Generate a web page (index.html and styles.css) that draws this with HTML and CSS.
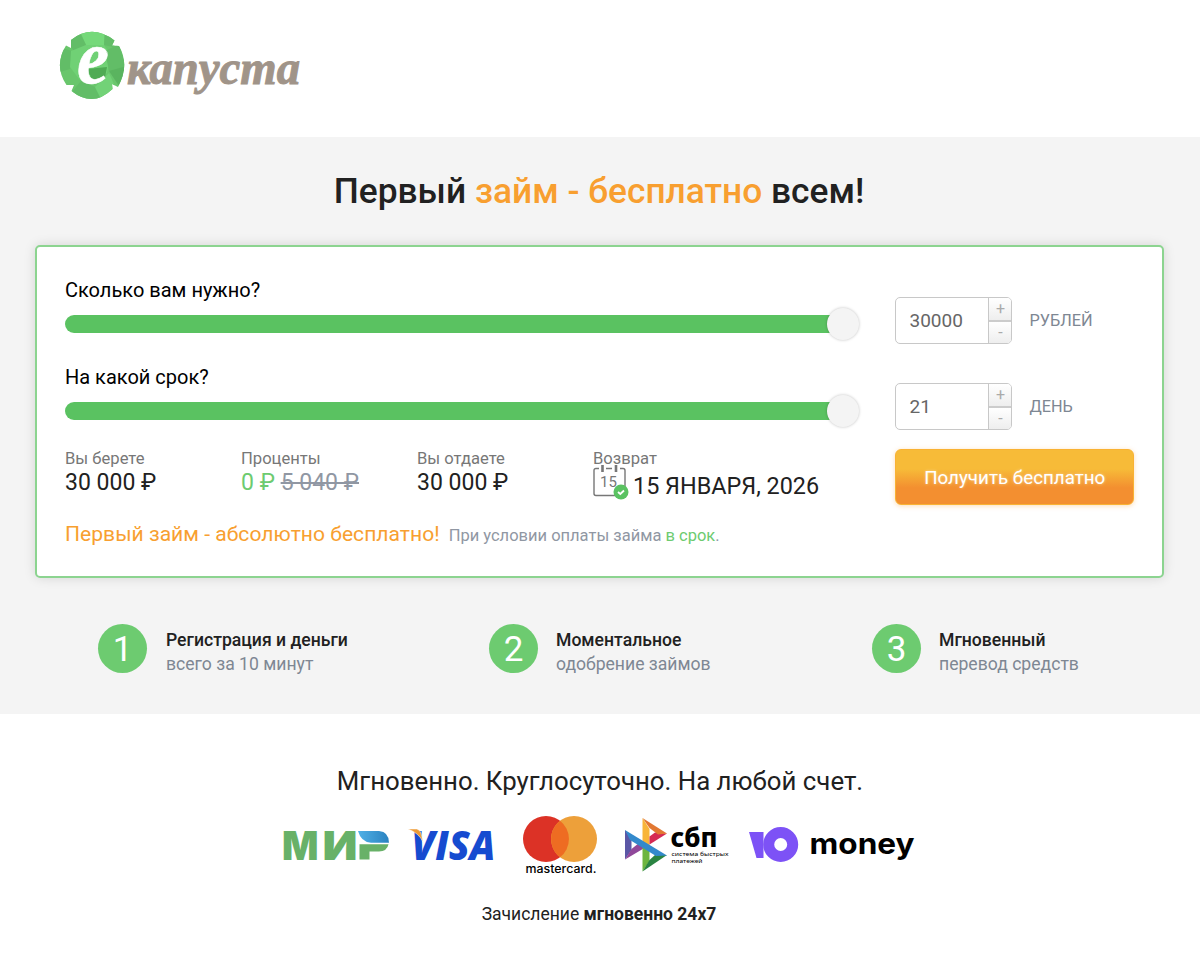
FILE: index.html
```html
<!DOCTYPE html>
<html lang="ru">

<head>
    <meta charset="UTF-8">
    <meta name="viewport" content="width=device-width, initial-scale=1.0">
    <title>еКапуста</title>
    <link rel="stylesheet" href="styles.css">
</head>

<body>
    <header class="header">
        <svg class="logo" width="250" height="80" viewBox="0 0 250 80">
            <clipPath id="gem">
                <path d="M12 9 Q33 -7.500 55.500 9.500 L53 14.500 L60 15 Q71 34 59 56 L53 53 L53.500 58 Q34 77 12.500 60 L15 54 L7.500 54 Q-5.500 35 7 14.500 L12 17 Z" />
            </clipPath>
            <g clip-path="url(#gem)">
                <rect x="-3" width="74" height="74" fill="#69c66c" />
                <path d="M20 -2 L27 14 L45 14 L46 -2 Z" fill="#75d97a" />
                <path d="M10 6 L20 0 L27 14 L15 20 L12 16 Z" fill="#62bd67" />
                <path d="M46 0 L45 14 L54 16 L60 10 Z" fill="#62bd67" />
                <path d="M-3 15 L13 20 L11 38 L-3 42 Z" fill="#62bd67" />
                <path d="M12 20 L27 14 L45 14 L52 24 L48 42 L34 54 L20 48 L11 36 Z" fill="#70d175" />
                <path d="M12 62 L22 50 L36 56 L43 70 L12 70 Z" fill="#62bd67" />
                <path d="M36 56 L50 42 L58 60 L43 70 Z" fill="#72d277" />
                <path d="M60 13 L68 40 L50 40 L46 20 Z" fill="#62bd67" />
                <path d="M50 40 L68 35 L62 58 Z" fill="#5ab45f" />
                <path d="M28 38 L48 36 L46 46 L34 50 Z" fill="#4fab54" />
            </g>
            <text class="logo-e" x="18" y="52" textLength="32" lengthAdjust="spacingAndGlyphs">е</text>
            <text class="logo-name" x="68" y="53" textLength="173" lengthAdjust="spacingAndGlyphs">капуста</text>
        </svg>
    </header>

    <main class="main">
        <h1 class="title">Первый <span>займ - бесплатно</span> всем!</h1>

        <section class="calc">
            <div class="calc-left">
                <div class="slider">
                    <label>Сколько вам нужно?</label>
                    <div class="track"><i class="handle"></i></div>
                </div>
                <div class="slider">
                    <label>На какой срок?</label>
                    <div class="track"><i class="handle"></i></div>
                </div>
                <div class="totals">
                    <div class="total">
                        <p>Вы берете</p>
                        <b>30 000 ₽</b>
                    </div>
                    <div class="total">
                        <p>Проценты</p>
                        <b><em>0 ₽</em> <s>5 040 ₽</s></b>
                    </div>
                    <div class="total">
                        <p>Вы отдаете</p>
                        <b>30 000 ₽</b>
                    </div>
                    <div class="total total-date">
                        <p>Возврат</p>
                        <div class="date">
                            <svg width="36" height="36" viewBox="0 0 36 36">
                                <path d="M6 3.500 H3 Q1 3.500 1 5.500 V28.500 Q1 30.500 3 30.500 H30 Q32 30.500 32 28.500 V5.500 Q32 3.500 30 3.500 H27 M13 3.500 H19" fill="none" stroke="#777" stroke-width="1.400" />
                                <path d="M9.500 0 V7 M23 0 V7" stroke="#777" stroke-width="2.600" />
                                <text x="7" y="22" class="cal-day">15</text>
                                <circle cx="28" cy="27" r="7.500" fill="#5ac261" />
                                <path d="M25 27 L27.300 29 L31 25.500" fill="none" stroke="#fff" stroke-width="1.800" />
                            </svg>
                            <b>15 ЯНВАРЯ, 2026</b>
                        </div>
                    </div>
                </div>
                <p class="note"><span>Первый займ - абсолютно бесплатно!</span><small>При условии оплаты займа <em>в срок</em>.</small></p>
            </div>
            <div class="calc-right">
                <div class="field">
                    <div class="spin">
                        <span class="value">30000</span>
                        <div class="steps-btn"><span>+</span><span>-</span></div>
                    </div>
                    <span class="unit">РУБЛЕЙ</span>
                </div>
                <div class="field">
                    <div class="spin">
                        <span class="value">21</span>
                        <div class="steps-btn"><span>+</span><span>-</span></div>
                    </div>
                    <span class="unit">ДЕНЬ</span>
                </div>
                <a class="btn">Получить бесплатно</a>
            </div>
        </section>

        <ul class="steps">
            <li>
                <span class="num">1</span>
                <p><b>Регистрация и деньги</b><span>всего за 10 минут</span></p>
            </li>
            <li>
                <span class="num">2</span>
                <p><b>Моментальное</b><span>одобрение займов</span></p>
            </li>
            <li>
                <span class="num">3</span>
                <p><b>Мгновенный</b><span>перевод средств</span></p>
            </li>
        </ul>
    </main>

    <footer class="footer">
        <h2>Мгновенно. Круглосуточно. На любой счет.</h2>
        <div class="pays">
            <svg class="mir" width="106" height="32" viewBox="0 0 106 32">
                <defs>
                    <linearGradient id="mirBlue">
                        <stop offset="0" stop-color="#4fb0e6" />
                        <stop offset="1" stop-color="#2a82c0" />
                    </linearGradient>
                </defs>
                <text x="-2" y="29.500" textLength="36.500" lengthAdjust="spacingAndGlyphs">М</text>
                <text x="38.500" y="29.500" textLength="35" lengthAdjust="spacingAndGlyphs">И</text>
                <path d="M75.500 14.300 H104.500 Q103 21.500 95 21.500 H85.500 V29.500 H75.500 Z" fill="#68b168" />
                <path d="M74 1 H95 Q105 2 105 12.800 H87 Q77 12 74 1 Z" fill="url(#mirBlue)" />
            </svg>
            <svg class="visa" width="88" height="32" viewBox="0 0 88 32">
                <text x="3.500" y="31" textLength="84" lengthAdjust="spacingAndGlyphs">VISA</text>
                <path d="M0 0 H9 Q12 1 13 4 L15 13 Q11 4 0 0 Z" fill="#ee9a35" stroke="#fff" stroke-width=".5" />
            </svg>
            <svg class="mastercard" width="76" height="62" viewBox="0 0 76 62">
                <circle cx="23" cy="24" r="23" fill="#dc3226" />
                <circle cx="51" cy="24" r="23" fill="#eda03a" />
                <path d="M37 5.800 A23 23 0 0 1 37 42.200 A23 23 0 0 1 37 5.800 Z" fill="#ee6c22" />
                <text x="2.500" y="58" textLength="71" lengthAdjust="spacingAndGlyphs">mastercard.</text>
            </svg>
            <svg class="sbp" width="104" height="54" viewBox="0 0 104 54">
                <path d="M0 11 L6.500 20 V31 L0 40.500 Z" fill="#5b57a6" />
                <path d="M0 40.500 L6.500 30 L14 24 L22 27.500 Z" fill="#90489a" />
                <path d="M17.500 -1 L24.500 10 V27 L17.500 23 Z" fill="#f8b53a" />
                <path d="M42 14.500 L24.500 25.500 V17.500 L30 13.500 Z" fill="#d52a54" />
                <path d="M17.500 -1 L42 14.500 L33 15.500 L24.500 9 Z" fill="#e27832" />
                <path d="M17.500 26 L24.500 30 V42 L17.500 52.500 Z" fill="#6db53f" />
                <path d="M17.500 52.500 L24.500 41 L30 36 H42 Z" fill="#2a8442" />
                <path d="M0 11 L42 36.500 L31 37 L5 21 Z" fill="#3389cc" />
                <text class="sbp-name" x="45.500" y="28" textLength="47" lengthAdjust="spacingAndGlyphs">сбп</text>
                <text class="sbp-sub" x="46.500" y="37" textLength="57" lengthAdjust="spacingAndGlyphs">система быстрых</text>
                <text class="sbp-sub" x="46.500" y="44" textLength="31" lengthAdjust="spacingAndGlyphs">платежей</text>
            </svg>
            <svg class="umoney" width="166" height="42" viewBox="0 0 166 42">
                <path d="M0 5 H14.500 V31 H7.500 Z" fill="#7d52f6" />
                <circle cx="31.700" cy="17.500" r="12" fill="none" stroke="#7d52f6" stroke-width="11" />
                <text x="60.500" y="26.500" textLength="105" lengthAdjust="spacingAndGlyphs">money</text>
            </svg>
        </div>
        <p class="credit">Зачисление <b>мгновенно 24х7</b></p>
    </footer>
</body>

</html>
```

FILE: styles.css
```css
* {
    margin: 0;
    padding: 0;
    box-sizing: border-box;
}

body {
    font-family: Roboto, "Liberation Sans", sans-serif;
    color: #212121;
    background: #fff;
}

ul {
    list-style: none;
}

em {
    font-style: normal;
    color: #6dcb70;
}

.header {
    height: 137px;
    padding: 31px 0 0 59px;
}

.logo,
.pays svg {
    display: block;
    overflow: visible;
}

.logo-e {
    font: italic bold 76px "Liberation Serif", serif;
    fill: #fff;
    stroke: #fff;
    stroke-width: 0.5px;
}

.logo-name {
    font: italic bold 49px "Liberation Serif", serif;
    fill: #a09489;
    stroke: #a09489;
    stroke-width: 1px;
}

.main {
    height: 577px;
    padding: 0 35px;
    background: #f4f4f4;
}

.title {
    padding-top: 33px;
    height: 108px;
    margin-left: -2px;
    font-size: 35.3px;
    line-height: 42px;
    font-weight: 500;
    text-align: center;
}

.title span {
    color: #f89f30;
}

.calc {
    display: flex;
    height: 333px;
    width: 1129px;
    padding: 0 28px;
    border: 2px solid #8cd490;
    border-radius: 5px;
    background: #fff;
    box-shadow: 0 0 12px rgba(0, 0, 0, 0.13);
}

.calc-left {
    width: 830px;
    padding-top: 31px;
}

.slider {
    height: 87px;
    color: #000;
}

.slider label {
    display: block;
    font-size: 20px;
    line-height: 25px;
}

.track {
    display: flex;
    align-items: center;
    justify-content: flex-end;
    width: 794px;
    height: 18px;
    margin-top: 12px;
    border-radius: 9px;
    background: linear-gradient(to right, #5ac261 780px, transparent 780px);
}

.handle {
    width: 32px;
    height: 32px;
    border-radius: 50%;
    background: #f4f4f4;
    box-shadow: 0 0 3px rgba(0, 0, 0, 0.25);
}

.totals {
    display: flex;
    height: 71px;
    margin-top: -2px;
}

.total {
    width: 176px;
    white-space: nowrap;
}

.total p {
    color: #777;
    font-size: 16.6px;
    line-height: 18px;
}

.total b {
    display: block;
    font-weight: 400;
    font-size: 23px;
    line-height: 29px;
}

.total s {
    color: #9097a3;
}

.date {
    display: flex;
    margin-top: -3px;
}

.date svg {
    flex: none;
    overflow: visible;
}

.date b {
    margin: 7px 0 0 4px;
    font-size: 23.4px;
}

.cal-day {
    font-size: 15px;
    fill: #777;
}

.note {
    color: #f89f30;
    font-size: 21.1px;
    line-height: 26px;
}

.note small {
    margin-left: 9px;
    color: #9097a3;
    font-size: 16.5px;
}

.calc-right {
    width: 239px;
    margin-left: 2px;
    padding-top: 50px;
}

.field {
    display: flex;
    align-items: center;
    height: 47px;
    margin-bottom: 39px;
}

.spin {
    display: flex;
    width: 117px;
    height: 47px;
    margin-right: 17px;
    border: 1px solid #c8c8c8;
    border-radius: 5px;
    overflow: hidden;
}

.value {
    flex: 1;
    padding-left: 13px;
    color: #666;
    font-size: 19px;
    line-height: 45px;
}

.steps-btn {
    width: 23px;
    border-left: 1px solid #c8c8c8;
}

.steps-btn span {
    display: block;
    height: 22px;
    background: linear-gradient(#fff, #eee);
    color: #aaa;
    font-size: 16px;
    line-height: 22px;
    text-align: center;
}

.steps-btn span + span {
    height: 23px;
    border-top: 2px solid #ccc;
}

.unit {
    color: #7e8793;
    font-size: 16.3px;
    line-height: 20px;
    padding-top: 1px;
}

.btn {
    display: block;
    height: 56px;
    margin-top: -20px;
    border: 1px solid #f9b233;
    border-radius: 6px;
    background: linear-gradient(#f7bb38 35%, #f38f30 70%);
    box-shadow: 0 1px 5px rgba(248, 159, 48, 0.35);
    color: #fff;
    font-size: 18.8px;
    line-height: 56px;
    text-align: center;
    text-shadow: 0 0 3px rgba(255, 255, 255, 0.5);
}

.steps {
    display: flex;
    padding: 46px 0 0 63px;
}

.steps li {
    display: flex;
}

.steps li:nth-child(1) {
    width: 391px;
}

.steps li:nth-child(2) {
    width: 383px;
}

.num {
    width: 49px;
    height: 49px;
    margin-right: 19px;
    border-radius: 50%;
    background: #6dcb70;
    color: #fff;
    font-size: 35px;
    line-height: 51px;
    text-align: center;
}

.steps b {
    display: block;
    padding-top: 4px;
    font-size: 17.6px;
    line-height: 24px;
    font-weight: 500;
}

.steps p span {
    color: #7e8793;
    font-size: 17.6px;
    line-height: 24px;
}

.steps li + li .num {
    margin-right: 18px;
}

.footer {
    padding-top: 51px;
    text-align: center;
}

.footer h2 {
    font-size: 25.8px;
    line-height: 32px;
    font-weight: 400;
}

.pays {
    display: flex;
    height: 62px;
    margin: 18px 0 0 284px;
}

.mir text {
    font: 900 40px Inter, sans-serif;
    fill: #68b168;
}

.mir {
    margin: 15px 18px 0 0;
}

.visa {
    margin: 14px 27px 0 0;
}

.visa text {
    font: italic 800 41px "Open Sans", sans-serif;
    fill: #164bd0;
}

.mastercard {
    margin-right: 26px;
}

.mastercard text {
    font: 500 12px Inter, sans-serif;
}

.sbp {
    margin: 4px 20px 0 0;
}

.sbp-name {
    font: 800 27px "Noto Sans", sans-serif;
}

.sbp-sub {
    font: 5px "Noto Sans", sans-serif;
}

.umoney {
    margin-top: 12px;
}

.umoney text {
    font: 700 29px Inter, sans-serif;
}

.credit {
    margin: 25px 2px 0 0;
    font-size: 17.5px;
    line-height: 24px;
}

.credit b {
    font-weight: 700;
}
```
